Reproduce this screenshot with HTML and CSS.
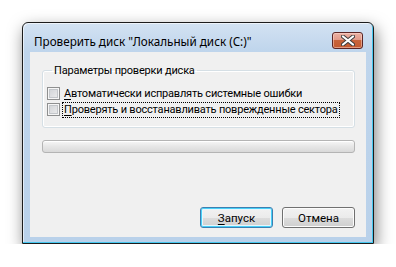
FILE: index.html
```html
<!DOCTYPE html>
<html lang="ru">
<head>
  <meta charset="UTF-8">
  <title>Проверить диск</title>
  <link rel="stylesheet" href="styles.css">
</head>
<body>
  <div class="window">
    <!-- Title bar -->
    <div class="titlebar">
      <span class="title">Проверить диск "Локальный диск (C:)"</span>
      <button class="close" aria-label="Закрыть">
        <svg width="14" height="11" viewBox="0 0 14 11">
          <path d="M2 1.5 L12 9.5 M12 1.5 L2 9.5" stroke="#3b3b3b" stroke-width="4" stroke-linecap="round"/>
          <path d="M2 1.5 L12 9.5 M12 1.5 L2 9.5" stroke="#fff" stroke-width="2.2" stroke-linecap="round"/>
        </svg>
      </button>
    </div>

    <!-- Client area -->
    <div class="client">
      <fieldset class="group">
        <legend>Параметры проверки диска</legend>
        <label class="check">
          <span class="box"></span>
          <span class="text"><u>А</u>втоматически исправлять системные ошибки</span>
        </label>
        <label class="check">
          <span class="box"></span>
          <span class="text focus"><u>П</u>роверять и восстанавливать поврежденные сектора</span>
        </label>
      </fieldset>

      <div class="progress"></div>

      <div class="actions">
        <button class="btn default"><u>З</u>апуск</button>
        <button class="btn">Отмена</button>
      </div>
    </div>
  </div>
</body>
</html>
```

FILE: styles.css
```css
/* General */
body {
  margin: 0;
  background: #fff;
  font-family: Roboto, "Noto Sans", sans-serif;
  font-size: 11px;
  letter-spacing: -0.2px;
  color: #000;
  white-space: nowrap;
}

u {
  text-decoration: underline;
  text-underline-offset: 2px;
}

/* Window frame */
.window {
  box-sizing: border-box;
  width: 352px;
  height: 222px;
  margin: 22px 0 0 22px;
  border: 1px solid #1c1c1c;
  border-radius: 6px 6px 0 0;
  background: linear-gradient(to bottom, #d3e2f2 0, #bfd5ec 28px, #b9d1ea 100%);
  box-shadow: inset -1px -1px 0 #46c8f0, inset 1px 1px 0 rgba(255, 255, 255, 0.6), 2px 6px 16px rgba(0, 0, 0, 0.5);
  display: flex;
  flex-direction: column;
}

/* Title bar */
.titlebar {
  height: 29px;
  display: flex;
  align-items: center;
  padding: 0 10px 0 11px;
}

.title {
  flex: 1;
  font-family: "Noto Sans", sans-serif;
  font-size: 11.7px;
  letter-spacing: 0;
  line-height: 15px;
  margin-top: 8px;
}

.close {
  width: 31px;
  height: 17px;
  margin-top: 5px;
  padding: 0;
  border: 1px solid #5b2525;
  border-radius: 3px;
  background: linear-gradient(to bottom, #eab1a4 0, #e29a8a 45%, #c8633a 50%, #c35a30 100%);
  box-shadow: inset 0 0 0 1px rgba(255, 220, 210, 0.5);
  display: flex;
  align-items: center;
  justify-content: center;
}

/* Client area */
.client {
  flex: 1;
  margin: 0 7px 6px 7px;
  background: #f0f0f0;
  display: flex;
  flex-direction: column;
  padding: 11px 11px 9px 12px;
}

/* Group box */
.group {
  margin: 0;
  padding: 8px 4px 10px 4px;
  border: 1px solid #d5dfe5;
  border-radius: 3px;
  box-shadow: inset 0 0 0 1px #fff;
  display: flex;
  flex-direction: column;
  gap: 1px;
}

.group legend {
  margin-left: 5px;
  padding: 0 2px;
  line-height: 15px;
}

.check {
  display: flex;
  align-items: center;
  height: 15px;
  gap: 3px;
}

.check .box {
  flex: none;
  box-sizing: border-box;
  width: 13px;
  height: 13px;
  border: 1px solid #8e8f8f;
  background: linear-gradient(135deg, #cdd0d4, #efefef);
  box-shadow: inset 0 0 0 1px #f6f6f6, inset 0 0 0 2px #c3c6ca;
}

.check .text {
  line-height: 14px;
  padding: 0 1px;
}

.check .focus {
  outline: 1px dotted #000;
}

/* Progress bar */
.progress {
  margin-top: 12px;
  height: 13px;
  box-sizing: border-box;
  border: 1px solid #b4b4b4;
  border-radius: 3px;
  background: linear-gradient(to bottom, #f7f7f7 0, #e6e6e6 50%, #d9d9d9 100%);
  box-shadow: inset 0 1px 0 #fff;
}

/* Buttons */
.actions {
  margin-top: auto;
  display: flex;
  justify-content: flex-end;
  gap: 9px;
}

.btn {
  width: 73px;
  height: 21px;
  padding: 0;
  font: inherit;
  font-size: 11.5px;
  color: #000;
  border: 1px solid #707070;
  border-radius: 3px;
  background: linear-gradient(to bottom, #f2f2f2 0, #ebebeb 50%, #dddddd 50%, #cfcfcf 100%);
  box-shadow: inset 0 0 0 1px #fcfcfc;
}

.btn.default {
  border-color: #3c7fb1;
  box-shadow: inset 0 0 0 1px #48d0f8, inset 0 0 0 2px #e6f6fd;
}
```
